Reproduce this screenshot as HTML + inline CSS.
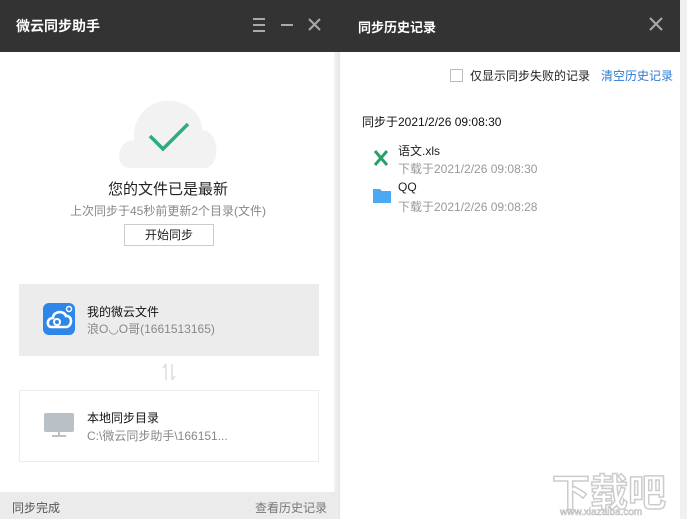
<!DOCTYPE html>
<html><head><meta charset="utf-8"><style>
*{margin:0;padding:0;box-sizing:border-box}
body{width:687px;height:519px;overflow:hidden;background:#f0f0f0;font-family:"Liberation Sans","Noto Sans CJK SC",sans-serif;position:relative}
.abs{position:absolute;white-space:nowrap}
</style></head><body>
<!-- left panel -->
<div class="abs" style="left:0;top:0;width:336px;height:519px;background:#fff"></div>
<div class="abs" style="left:334px;top:52px;width:6px;height:467px;background:linear-gradient(90deg,#f3f3f3,#e6e6e6)"></div>
<div class="abs" style="left:0;top:0;width:340px;height:52px;background:#333"></div>
<div class="abs" style="left:16px;top:16px;color:#fff;font-size:14px;font-weight:bold">微云同步助手</div>
<svg class="abs" style="left:250px;top:16px" width="90" height="18">
<g stroke="#aaa" stroke-width="2"><path d="M3 3h12M3 9h12M3 15h12"/><path d="M31 9h12"/><path d="M59 3l11 11M70 3l-11 11"/></g></svg>
<svg class="abs" style="left:118px;top:94px" width="102" height="76">
<path d="M12 74 C-4 74 -2 46 16 46 C14 16 40 2 60 8 C76 12 84 24 84 36 C102 36 104 74 86 74 Z" fill="#f2f2f2"/>
<path d="M32 42 L45 55 L70 30" stroke="#2bad7c" stroke-width="3.5" fill="none"/></svg>
<div class="abs" style="left:0;width:336px;top:178px;text-align:center;font-size:15px;color:#222">您的文件已是最新</div>
<div class="abs" style="left:0;width:336px;top:202px;text-align:center;font-size:12px;color:#888">上次同步于45秒前更新2个目录(文件)</div>
<div class="abs" style="left:124px;top:224px;width:90px;height:22px;border:1px solid #ccc;text-align:center;font-size:12px;line-height:20px;color:#222">开始同步</div>
<div class="abs" style="left:19px;top:284px;width:300px;height:72px;background:#ececec"></div>
<svg class="abs" style="left:42px;top:302px" width="34" height="34"><rect x="1" y="1" width="32" height="32" rx="6" fill="#2d86e8"/>
<path d="M9 25 C4 24 5 16 11 16 C11 9 22 8 24 14 C30 13 31 23 25 25 Z" fill="none" stroke="#fff" stroke-width="2.6"/><circle cx="15" cy="20" r="3" fill="none" stroke="#fff" stroke-width="2"/><circle cx="27" cy="7" r="2.5" fill="none" stroke="#fff" stroke-width="1.5"/></svg>
<div class="abs" style="left:87px;top:303px;font-size:12px;color:#111">我的微云文件</div>
<div class="abs" style="left:87px;top:320px;font-size:12px;color:#888">浪O◡O哥(1661513165)</div>
<svg class="abs" style="left:160px;top:362px" width="18" height="20"><g stroke="#ddd" stroke-width="1.5" fill="none"><path d="M6 2v16M6 2l-3 4M12 2v16M12 18l3-4"/></g></svg>
<div class="abs" style="left:19px;top:390px;width:300px;height:72px;border:1px solid #ececec;background:#fff"></div>
<svg class="abs" style="left:43px;top:412px" width="34" height="28"><rect x="1" y="1" width="30" height="19" rx="2" fill="#b9c0c6"/><rect x="9" y="23" width="14" height="2" fill="#b9c0c6"/><rect x="15" y="20" width="2" height="4" fill="#b9c0c6"/></svg>
<div class="abs" style="left:87px;top:409px;font-size:12px;color:#111">本地同步目录</div>
<div class="abs" style="left:87px;top:427px;font-size:12px;color:#888">C:\微云同步助手\166151...</div>
<div class="abs" style="left:0;top:492px;width:336px;height:27px;background:#ebebeb"></div>
<div class="abs" style="left:12px;top:499px;font-size:12px;color:#555">同步完成</div>
<div class="abs" style="left:255px;top:499px;font-size:12px;color:#777">查看历史记录</div>
<!-- right panel -->
<div class="abs" style="left:340px;top:0;width:340px;height:519px;background:#fff"></div>
<div class="abs" style="left:340px;top:0;width:340px;height:52px;background:#333"></div>
<div class="abs" style="left:358px;top:17px;color:#fff;font-size:13px;font-weight:bold">同步历史记录</div>
<svg class="abs" style="left:648px;top:16px" width="16" height="16"><path d="M2 2l12 12M14 2L2 14" stroke="#aaa" stroke-width="2"/></svg>
<div class="abs" style="left:450px;top:69px;width:13px;height:13px;border:1px solid #bbb"></div>
<div class="abs" style="left:470px;top:67px;font-size:12px;color:#222">仅显示同步失败的记录</div>
<div class="abs" style="left:601px;top:67px;font-size:12px;color:#2b7bd6">清空历史记录</div>
<div class="abs" style="left:362px;top:113px;font-size:12px;color:#111">同步于2021/2/26 09:08:30</div>
<svg class="abs" style="left:372px;top:149px" width="18" height="18"><path d="M3 2l12 14M15 2L3 16" stroke="#25a06a" stroke-width="3"/></svg>
<div class="abs" style="left:398px;top:142px;font-size:12px;color:#222">语文.xls</div>
<div class="abs" style="left:398px;top:160px;font-size:12px;color:#999">下载于2021/2/26 09:08:30</div>
<svg class="abs" style="left:372px;top:186px" width="20" height="18"><path d="M1 3h7l2 2h9v12H1z" fill="#4ba9f2"/></svg>
<div class="abs" style="left:398px;top:180px;font-size:12px;color:#222">QQ</div>
<div class="abs" style="left:398px;top:198px;font-size:12px;color:#999">下载于2021/2/26 09:08:28</div>
<div class="abs" style="left:552px;top:462px;font-size:38px;color:#fff;font-weight:bold;-webkit-text-stroke:1.5px #ccc">下载吧</div>
<div class="abs" style="left:560px;top:507px;font-size:10px;color:#fff;-webkit-text-stroke:0.6px #bbb">www.xiazaiba.com</div>
</body></html>
